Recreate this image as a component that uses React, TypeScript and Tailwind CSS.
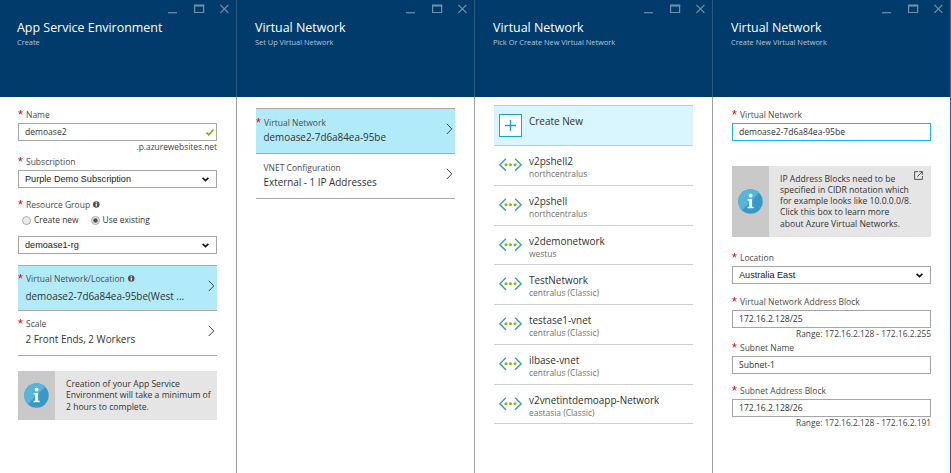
import React from "react";

const networks = [
  { name: "v2pshell2", region: "northcentralus" },
  { name: "v2pshell", region: "northcentralus" },
  { name: "v2demonetwork", region: "westus" },
  { name: "TestNetwork", region: "centralus (Classic)" },
  { name: "testase1-vnet", region: "centralus (Classic)" },
  { name: "ilbase-vnet", region: "centralus (Classic)" },
  { name: "v2vnetintdemoapp-Network", region: "eastasia (Classic)" },
];

function WindowButtons() {
  return (
    <svg width="62" height="11" viewBox="0 0 62 11" fill="none" stroke="#6f90ac">
      <path d="M0 8.7h9" strokeWidth="1.2" />
      <path d="M26.6 1.3h9v7.2h-9z" strokeWidth="1.2" />
      <path d="M26 1.6h10.2" strokeWidth="1.9" />
      <path d="M52.4 0.9l8 8M60.4 0.9l-8 8" strokeWidth="1.3" />
    </svg>
  );
}

function Blade({
  title,
  subtitle,
  first = false,
  children,
}: {
  title: string;
  subtitle: string;
  first?: boolean;
  children: React.ReactNode;
}) {
  return (
    <section className="flex h-full min-w-0 flex-col">
      <header
        className={`h-[97px] shrink-0 bg-[#003b6b] text-white ${first ? "pl-[17px]" : "border-l border-[#2a5a83] pl-[18px]"}`}
      >
        <div className="flex h-[19px] justify-end pr-[6px] pt-[4px]">
          <WindowButtons />
        </div>
        <h1 className="h-[17px] whitespace-nowrap text-[12.45px] leading-[17px]">{title}</h1>
        <p className="h-[12px] whitespace-nowrap text-[7.4px] leading-[12px] text-[#b4c8da]">{subtitle}</p>
      </header>
      <div className={`min-h-0 flex-1 bg-white ${first ? "pl-[18px]" : "border-l border-[#a0a0a0] pl-[19px]"}`}>
        <div className="flex w-[199px] flex-col">{children}</div>
      </div>
    </section>
  );
}

function Star() {
  return (
    <svg className="mt-[1px] shrink-0" width="5" height="5" viewBox="0 0 5 5" stroke="#e81123" strokeWidth="1">
      <path d="M2.4 2.4V0.1M2.4 2.4L0.3 1.7M2.4 2.4L4.5 1.7M2.4 2.4L1.1 4.4M2.4 2.4L3.7 4.4" />
    </svg>
  );
}

function InfoDot() {
  return (
    <svg className="ml-[3px] mt-[2px]" width="7" height="7" viewBox="0 0 7 7">
      <circle cx="3.3" cy="3.5" r="3.3" fill="#555" />
      <path d="M3.3 1.2v1M3.3 2.8v2.7" stroke="#fff" strokeWidth="1.1" />
    </svg>
  );
}

function Label({ children, info = false }: { children: string; info?: boolean }) {
  return (
    <div className="flex h-[12px]">
      <Star />
      <span className="ml-[3px] whitespace-nowrap text-[8.5px] leading-[12px] text-[#4c4c4c]">{children}</span>
      {info && <InfoDot />}
    </div>
  );
}

function Field({ value, focused = false, valid = false }: { value: string; focused?: boolean; valid?: boolean }) {
  return (
    <div
      className={`flex h-[18px] shrink-0 items-center justify-between border pl-[6px] pr-[2px] ${focused ? "border-[#1fb5e8]" : "border-[#a6a6a6]"}`}
    >
      <span className="text-[8.55px] leading-[16px] text-[#333]">{value}</span>
      {valid && (
        <svg width="8" height="7" viewBox="0 0 8 7" fill="none" stroke="#6bb700" strokeWidth="1.6">
          <path d="M0.5 3.6l2.3 2.2L7.4 0.8" />
        </svg>
      )}
    </div>
  );
}

function Dropdown({ value }: { value: string }) {
  return (
    <div className="flex h-[18px] shrink-0 items-center justify-between border border-[#a6a6a6] pl-[6px] pr-[7px]">
      <span className="font-['Liberation_Sans',Arial,sans-serif] text-[9.15px] leading-[16px] text-[#222]">{value}</span>
      <svg width="7" height="5" viewBox="0 0 7 5" fill="none" stroke="#111" strokeWidth="1.6">
        <path d="M0.6 0.8l2.9 2.8L6.4 0.8" />
      </svg>
    </div>
  );
}

function Picker({
  label,
  value,
  required = false,
  info = false,
  active = false,
  className,
  valueClassName,
}: {
  label: string;
  value: string;
  required?: boolean;
  info?: boolean;
  active?: boolean;
  className: string;
  valueClassName: string;
}) {
  return (
    <div
      className={`flex shrink-0 items-center justify-between border-[#a9a9a9] pr-[2px] ${active ? "h-[46px] border-y bg-[#b1ebfa]" : "h-[45px] border-b"}`}
    >
      <div className={`self-start ${className}`}>
        {required ? (
          <Label info={info}>{label}</Label>
        ) : (
          <div className="h-[12px] pl-[7.5px] text-[8.5px] leading-[12px] text-[#4c4c4c]">{label}</div>
        )}
        <div className={`whitespace-nowrap pl-[7.5px] text-[9.9px] leading-[15px] text-[#333] ${valueClassName}`}>
          {value}
        </div>
      </div>
      <svg className="mb-[5px] shrink-0" width="7" height="12" viewBox="0 0 7 12" fill="none" stroke="#444">
        <path d="M0.8 0.8l5 5.1-5 5.1" />
      </svg>
    </div>
  );
}

function Radio({ checked = false }: { checked?: boolean }) {
  return (
    <svg width="9" height="9" viewBox="0 0 9 9">
      <circle cx="4.5" cy="4.5" r="4" fill="#ececec" stroke="#a3a3a3" strokeWidth="0.9" />
      {checked && <circle cx="4.5" cy="4.5" r="2.3" fill="#505050" />}
    </svg>
  );
}

function InfoBox({ children }: { children: React.ReactNode }) {
  return (
    <div className="flex shrink-0 bg-[#e5e5e5]">
      <div className="flex w-[37px] shrink-0 items-center justify-center bg-[#c9c9c9]">
        <svg width="25" height="25" viewBox="0 0 25 25">
          <circle cx="12.5" cy="12.5" r="12.2" fill="#3999c6" />
          <path d="M3.8 21.2A12.3 12.3 0 0 1 21.2 3.8z" fill="#59b4d9" />
          <circle cx="12.6" cy="6.6" r="1.9" fill="#fff" />
          <path d="M9.6 10h4.5v7.7h1.5v1.6H9.6v-1.6h1.6v-6.1H9.6z" fill="#fff" />
        </svg>
      </div>
      {children}
    </div>
  );
}

function NetworkIcon() {
  return (
    <svg width="23" height="14" viewBox="0 0 23 14" fill="none" stroke="#3999c6" strokeWidth="1.4">
      <path d="M6.9 0.8L0.9 6.8l6 6M16.1 0.8l6 6-6 6" />
      <g fill="#7fba00" stroke="none">
        <circle cx="7" cy="6.8" r="1.5" />
        <circle cx="11.5" cy="6.8" r="1.5" />
        <circle cx="16" cy="6.8" r="1.5" />
      </g>
    </svg>
  );
}

function Note({ children }: { children: string }) {
  return <div className="h-[12px] text-right text-[8.4px] leading-[12px] text-[#444]">{children}</div>;
}

export default function App() {
  return (
    <main className="grid h-[473px] w-[951px] grid-cols-[236px_238px_238px_238px_1px] overflow-hidden bg-white font-['Open_Sans','Noto_Sans',sans-serif]">
      <Blade title="App Service Environment" subtitle="Create" first>
        <div className="h-[12px]" />
        <Label>Name</Label>
        <div className="h-[2px]" />
        <Field value="demoase2" valid />
        <Note>.p.azurewebsites.net</Note>
        <div className="mt-[3px]">
          <Label>Subscription</Label>
        </div>
        <div className="h-[2px]" />
        <Dropdown value="Purple Demo Subscription" />
        <div className="mt-[11px]">
          <Label info>Resource Group</Label>
        </div>
        <div className="mt-[3px] flex h-[12px] items-center pl-[4px] text-[8.45px] leading-[12px] text-[#333]">
          <Radio />
          <span className="ml-[3px]">Create new</span>
          <span className="ml-[12px] flex items-center">
            <Radio checked />
            <span className="ml-[3px]">Use existing</span>
          </span>
        </div>
        <div className="h-[10px]" />
        <Dropdown value="demoase1-rg" />
        <div className="h-[11px]" />
        <Picker
          label="Virtual Network/Location"
          value="demoase2-7d6a84ea-95be(West ..."
          required
          info
          active
          className="pt-[7px]"
          valueClassName="mt-[4px]"
        />
        <Picker
          label="Scale"
          value="2 Front Ends, 2 Workers"
          required
          className="pt-[7px]"
          valueClassName="mt-[2px]"
        />
        <div className="h-[15px]" />
        <InfoBox>
          <p className="h-[49px] whitespace-nowrap pl-[11px] pt-[8px] text-[8.6px] leading-[11.3px] text-[#333]">
            Creation of your App Service
            <br />
            Environment will take a minimum of
            <br />2 hours to complete.
          </p>
        </InfoBox>
      </Blade>

      <Blade title="Virtual Network" subtitle="Set Up Virtual Network">
        <div className="h-[11px]" />
        <Picker
          label="Virtual Network"
          value="demoase2-7d6a84ea-95be"
          required
          active
          className="pt-[8px]"
          valueClassName="mt-[1px]"
        />
        <Picker
          label="VNET Configuration"
          value="External - 1 IP Addresses"
          className="pt-[8px]"
          valueClassName="mt-[1px]"
        />
      </Blade>

      <Blade title="Virtual Network" subtitle="Pick Or Create New Virtual Network">
        <div className="h-[8px]" />
        <div className="flex h-[41px] shrink-0 border-y border-[#c8c8c8] bg-[#d9f5fd] pl-[5px] pt-[8px]">
          <div className="flex h-[23px] w-[23px] items-center justify-center border border-[#1ba1e2] bg-white">
            <svg width="11" height="11" viewBox="0 0 11 11" stroke="#1ba1e2" strokeWidth="1.3">
              <path d="M5.5 0v11M0 5.5h11" />
            </svg>
          </div>
          <span className="ml-[7px] text-[9.95px] leading-[14px] text-[#333]">Create New</span>
        </div>
        {networks.map((n) => (
          <div key={n.name} className="flex h-[39.75px] shrink-0 border-b border-[#cfcfcf] pl-[5px] pt-[8px]">
            <div className="mt-[4px] shrink-0">
              <NetworkIcon />
            </div>
            <div className="ml-[7px] whitespace-nowrap">
              <div className="text-[9.95px] leading-[14px] text-[#333]">{n.name}</div>
              <div className="text-[8.45px] leading-[12.5px] text-[#707070]">{n.region}</div>
            </div>
          </div>
        ))}
      </Blade>

      <Blade title="Virtual Network" subtitle="Create New Virtual Network">
        <div className="h-[12px]" />
        <Label>Virtual Network</Label>
        <div className="h-[2px]" />
        <Field value="demoase2-7d6a84ea-95be" focused />
        <div className="h-[25px]" />
        <InfoBox>
          <div className="flex h-[71px] flex-1 justify-between pl-[11px] pr-[8px]">
            <p className="whitespace-nowrap pt-[7.5px] text-[8.6px] leading-[11.3px] text-[#333]">
              IP Address Blocks need to be
              <br />
              specified in CIDR notation which
              <br />
              for example looks like 10.0.0.0/8.
              <br />
              Click this box to learn more
              <br />
              about Azure Virtual Networks.
            </p>
            <svg className="-ml-3 mt-[5px] shrink-0" width="9" height="9" viewBox="0 0 9 9" fill="none" stroke="#444">
              <path d="M4 0.6H0.6v7.8h7.8V5" strokeWidth="0.9" />
              <path d="M5.2 0.6h3.2v3.2M8.2 0.8L3.4 5.6" strokeWidth="0.9" />
            </svg>
          </div>
        </InfoBox>
        <div className="h-[15px]" />
        <Label>Location</Label>
        <div className="h-[2px]" />
        <Dropdown value="Australia East" />
        <div className="h-[12px]" />
        <Label>Virtual Network Address Block</Label>
        <div className="h-[2px]" />
        <Field value="172.16.2.128/25" />
        <Note>Range: 172.16.2.128 - 172.16.2.255</Note>
        <div className="h-[2px]" />
        <Label>Subnet Name</Label>
        <div className="h-[2px]" />
        <Field value="Subnet-1" />
        <div className="h-[11px]" />
        <Label>Subnet Address Block</Label>
        <div className="h-[2px]" />
        <Field value="172.16.2.128/26" />
        <Note>Range: 172.16.2.128 - 172.16.2.191</Note>
      </Blade>
      <div className="bg-[#0072c6]" />
    </main>
  );
}
